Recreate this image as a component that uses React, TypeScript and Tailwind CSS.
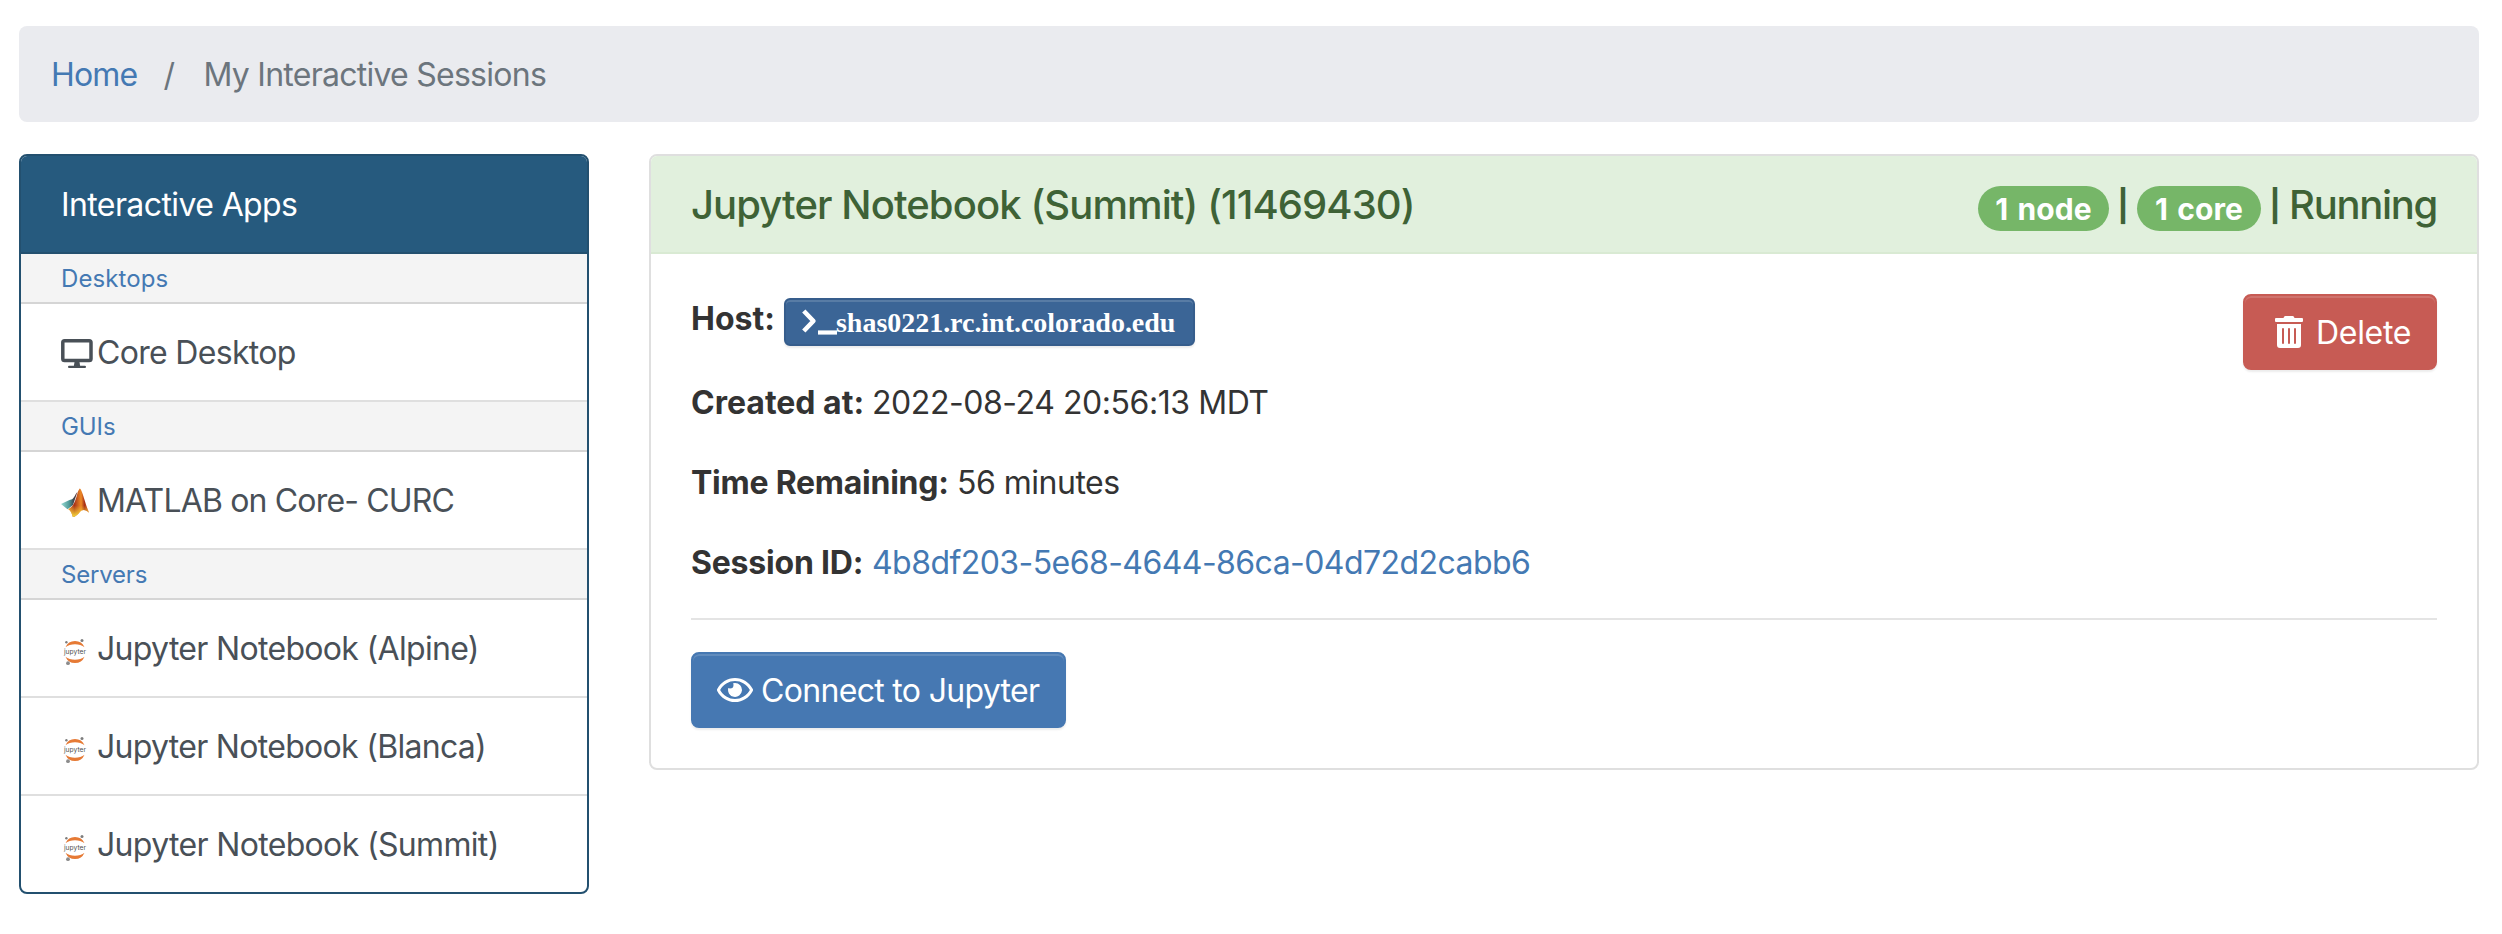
import React from 'react';
import { FaRegEye, FaTrashAlt } from 'react-icons/fa';

function DesktopIcon() {
  return (
    <svg width="32" height="32" viewBox="0 0 32 32" fill="none">
      <rect x="1.8" y="4.800" width="28.200" height="19.800" rx="1.800" stroke="#495057" strokeWidth="3.500" />
      <path d="M13.600 25.500h4.800l.8 5h-6.400z" fill="#495057" />
      <rect x="7" y="29.800" width="18" height="2.200" rx="1.100" fill="#495057" />
    </svg>
  );
}

function MatlabIcon() {
  return (
    <svg width="28" height="29" viewBox="0 0 28 29">
      <defs>
        <linearGradient id="wing" x1="0" y1="0" x2="1" y2="0">
          <stop offset="0" stopColor="#9adcd4" />
          <stop offset="0.5" stopColor="#4f9a98" />
          <stop offset="0.75" stopColor="#3d4a55" />
          <stop offset="1" stopColor="#6b2a24" />
        </linearGradient>
        <linearGradient id="peak" x1="0" y1="0" x2="1" y2="0">
          <stop offset="0" stopColor="#e8862a" />
          <stop offset="0.3" stopColor="#a8341a" />
          <stop offset="0.62" stopColor="#ee8a25" />
          <stop offset="0.78" stopColor="#a83218" />
          <stop offset="1" stopColor="#d9622a" />
        </linearGradient>
        <linearGradient id="flame" x1="0" y1="0" x2="0" y2="1">
          <stop offset="0.6" stopColor="#f7d435" stopOpacity="0" />
          <stop offset="1" stopColor="#f9e03c" />
        </linearGradient>
      </defs>
      <path d="M0 16l8.500-4c2.600-.3 4-1.400 6-5.500l2-2.700L12 17l-5.500 4.200z" fill="url(#wing)" />
      <path d="M18.700.6c2.300.5 4.300 11.400 9.300 24.200-3.700-3.700-6.700-3.600-9.300-.6-2 2.400-4 4.300-6.800 4.800-.9-3-2-6.500-4.700-7.700 6.700-3.300 8-12.300 10-18.300z" fill="url(#peak)" />
      <path d="M18.700.6c2.300.5 4.300 11.400 9.300 24.200-3.700-3.700-6.700-3.600-9.300-.6-2 2.400-4 4.300-6.800 4.800-.9-3-2-6.500-4.700-7.700 6.700-3.300 8-12.300 10-18.300z" fill="url(#flame)" />
    </svg>
  );
}

function JupyterIcon() {
  return (
    <svg width="28" height="28" viewBox="0 0 28 28">
      <path d="M4.500 9.300a10.300 10.300 0 0 1 19 0c-4.500-4-14.500-4-19 0z" fill="#e67a35" />
      <path d="M4.500 18.700a10.300 10.300 0 0 0 19 0c-4.500 4-14.500 4-19 0z" fill="#e67a35" />
      <circle cx="5.400" cy="4.300" r="1.200" fill="#7d7d7d" />
      <circle cx="21" cy="2.600" r="1.500" fill="#7d7d7d" />
      <circle cx="7" cy="25.200" r="1.900" fill="#8b8b8b" />
      <text x="14" y="15.800" textAnchor="middle" fontSize="7" textLength="22" lengthAdjust="spacingAndGlyphs" fill="#4e4e4e" fontFamily="Inter, sans-serif">
        jupyter
      </text>
    </svg>
  );
}

function TerminalIcon() {
  return (
    <svg width="36" height="28" viewBox="0 0 36 28" fill="none" stroke="#fff" strokeLinejoin="round" className="-mr-px -ml-px shrink-0">
      <path d="M2.800 3l9.600 10-9.600 10" strokeWidth="4.600" />
      <path d="M17 24.500h19" strokeWidth="4.200" />
    </svg>
  );
}

function GroupLabel({ children, track }: { children: string; track: string }) {
  return (
    <div className="flex h-[50px] items-center border-b-2 border-[#d5d5d5] bg-[#f4f4f4] pl-10 text-2xl leading-none text-[#4479b3]">
      <span className={'translate-y-px ' + track}>{children}</span>
    </div>
  );
}

function AppLink({ icon, label, track, last }: { icon: React.ReactNode; label: string; track: string; last?: boolean }) {
  return (
    <a className={'flex items-center pl-10 text-[32px] leading-[48px] text-[#495057] ' + (last ? 'h-24' : 'h-[98px] border-b-2 border-[#dfdfdf]')}>
      <span className="flex w-9 shrink-0 items-center">{icon}</span>
      <span className={'translate-y-px ' + track}>{label}</span>
    </a>
  );
}

function Pill({ children, width }: { children: string; width: string }) {
  return (
    <span className={'mt-[9px] flex h-[45px] items-center justify-center rounded-full bg-[#76b668] text-[30px] font-bold tracking-[0.1px] [word-spacing:2px] text-white ' + width}>
      <span>{children}</span>
    </span>
  );
}

function Divider() {
  return <span className="w-[28px] pt-1 text-center text-[31px] font-bold">|</span>;
}

export default function App() {
  return (
    <div className="min-h-screen bg-white pt-[26px] pr-[23px] pl-[19px] font-[Inter,sans-serif] text-[32px] leading-[48px] text-[#333]">
      <nav className="flex h-24 items-center rounded-lg bg-[#eaebef] pl-8">
        <a className="translate-y-px tracking-[-0.8px] text-[#4479b3]">Home</a>
        <span className="ml-[26px] w-10 translate-y-px text-[#6c757d]">/</span>
        <span className="translate-y-px tracking-[-0.74px] text-[#6c757d]">My Interactive Sessions</span>
      </nav>

      <div className="mt-8 flex items-start gap-[60px]">
        <aside className="w-[570px] shrink-0 overflow-hidden rounded-lg border-2 border-[#23506f]">
          <div className="flex h-[98px] items-center border-b-2 border-[#23506f] bg-[#265a7e] pl-10 tracking-[-0.6px] text-white">
            <span className="translate-y-px">Interactive Apps</span>
          </div>
          <GroupLabel track="tracking-[0.1px]">Desktops</GroupLabel>
          <AppLink icon={<DesktopIcon />} label="Core Desktop" track="tracking-[-0.68px]" />
          <GroupLabel track="tracking-[-0.1px]">GUIs</GroupLabel>
          <AppLink icon={<span className="pt-1"><MatlabIcon /></span>} label="MATLAB on Core- CURC" track="tracking-[-0.83px]" />
          <GroupLabel track="tracking-[-0.2px]">Servers</GroupLabel>
          <AppLink icon={<span className="pt-2"><JupyterIcon /></span>} label="Jupyter Notebook (Alpine)" track="tracking-[-0.68px]" />
          <AppLink icon={<span className="pt-2"><JupyterIcon /></span>} label="Jupyter Notebook (Blanca)" track="tracking-[-0.7px]" />
          <AppLink icon={<span className="pt-2"><JupyterIcon /></span>} label="Jupyter Notebook (Summit)" track="tracking-[-0.66px]" last />
        </aside>

        <main className="min-w-0 grow overflow-hidden rounded-lg border-2 border-[#dfdfdf]">
          <header className="flex h-[98px] items-center justify-between border-b-2 border-[#d9ead3] bg-[#e1f0dd] px-10 text-[40px] font-medium text-[#3e6236]">
            <h5 className="translate-y-px tracking-[-0.9px]">Jupyter Notebook (Summit) (11469430)</h5>
            <div className="flex items-center">
              <Pill width="w-[131px]">1 node</Pill>
              <Divider />
              <Pill width="w-[124px]">1 core</Pill>
              <Divider />
              <span className="translate-y-px tracking-[-1.3px]">Running</span>
            </div>
          </header>

          <div className="flex flex-col p-10">
            <div className="flex items-start justify-between">
              <div className="flex flex-col gap-8">
                <p className="flex h-[52px] items-start">
                  <strong className="w-[93px] translate-y-px font-bold">Host:</strong>
                  <a className="mt-1 flex h-12 w-[411px] items-center rounded-md border-2 border-[#365d8c] bg-[#3b6596] pl-4 font-['Liberation_Serif',serif] text-[28px] font-bold text-white shadow-[inset_0_2px_0_rgba(255,255,255,0.15),0_2px_2px_rgba(0,0,0,0.075)]">
                    <TerminalIcon />
                    <span className="pt-[2px] leading-none tracking-[-0.03px]">shas0221.rc.int.colorado.edu</span>
                  </a>
                </p>
                <p className="flex translate-y-px">
                  <strong className="w-[181px] font-bold">Created at:</strong>
                  <span className="tracking-[-0.44px]">2022-08-24 20:56:13 MDT</span>
                </p>
                <p className="flex translate-y-px">
                  <strong className="w-[266px] font-bold tracking-[-0.25px]">Time Remaining:</strong>
                  <span className="tracking-[-0.5px]">56 minutes</span>
                </p>
                <p className="flex translate-y-px">
                  <strong className="w-[181px] font-bold tracking-[-0.2px]">Session ID:</strong>
                  <a className="tracking-[-0.56px] text-[#4479b3]">4b8df203-5e68-4644-86ca-04d72d2cabb6</a>
                </p>
              </div>
              <button className="flex h-[76px] w-[194px] items-center rounded-lg border-2 border-[#c75b54] bg-[#c75b54] pl-[30px] text-white shadow-[inset_0_2px_0_rgba(255,255,255,0.15),0_2px_2px_rgba(0,0,0,0.075)]">
                <FaTrashAlt className="h-8 w-7" />
                <span className="ml-[13px] translate-y-px tracking-[-0.3px]">Delete</span>
              </button>
            </div>
            <hr className="my-8 border-t-2 border-[#e4e4e4]" />
            <button className="flex h-[76px] w-[375px] items-center rounded-lg border-2 border-[#4678b2] bg-[#4678b2] pl-6 text-white shadow-[inset_0_2px_0_rgba(255,255,255,0.15),0_2px_2px_rgba(0,0,0,0.075)]">
              <FaRegEye className="h-8 w-9" />
              <span className="ml-2 translate-y-px tracking-[-0.68px] whitespace-nowrap">Connect to Jupyter</span>
            </button>
          </div>
        </main>
      </div>
    </div>
  );
}
